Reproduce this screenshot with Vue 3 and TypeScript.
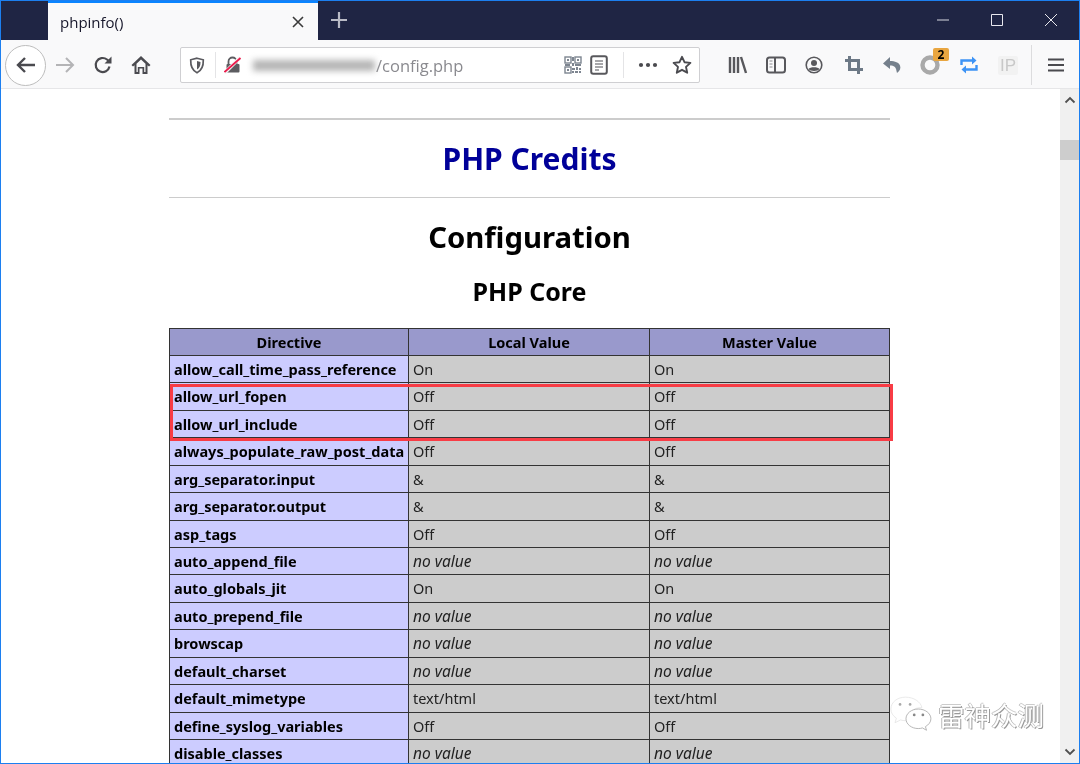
<script setup lang="ts">
interface Row { name: string; local: string; master: string }
const none = 'no value'
const rows: Row[] = [
  { name: 'allow_call_time_pass_reference', local: 'On', master: 'On' },
  { name: 'allow_url_fopen', local: 'Off', master: 'Off' },
  { name: 'allow_url_include', local: 'Off', master: 'Off' },
  { name: 'always_populate_raw_post_data', local: 'Off', master: 'Off' },
  { name: 'arg_separator.input', local: '&', master: '&' },
  { name: 'arg_separator.output', local: '&', master: '&' },
  { name: 'asp_tags', local: 'Off', master: 'Off' },
  { name: 'auto_append_file', local: none, master: none },
  { name: 'auto_globals_jit', local: 'On', master: 'On' },
  { name: 'auto_prepend_file', local: none, master: none },
  { name: 'browscap', local: none, master: none },
  { name: 'default_charset', local: none, master: none },
  { name: 'default_mimetype', local: 'text/html', master: 'text/html' },
  { name: 'define_syslog_variables', local: 'Off', master: 'Off' },
  { name: 'disable_classes', local: none, master: none },
]
</script>

<template>
  <div class="window">
    <header class="tabbar">
      <div class="tab">
        <span class="tab-title">phpinfo()</span>
        <svg class="tab-close" width="14" height="14" viewBox="0 0 14 14"><path d="M2 2l10 10M12 2L2 12" stroke="#3a3a3a" stroke-width="1.6" fill="none" /></svg>
      </div>
      <svg class="newtab" width="18" height="18" viewBox="0 0 18 18"><path d="M9 1v16M1 9h16" stroke="#b9bbc6" stroke-width="2.2" fill="none" /></svg>
      <div class="winctl">
        <svg width="14" height="14" viewBox="0 0 14 14"><path d="M1 7h12" stroke="#d8d9e0" stroke-width="1" /></svg>
        <svg width="14" height="14" viewBox="0 0 14 14"><path d="M1.5 1.5h11v11h-11z" stroke="#e8e8ee" stroke-width="1" fill="none" /></svg>
        <svg width="14" height="14" viewBox="0 0 14 14"><path d="M1 1l12 12M13 1L1 13" stroke="#e8e8ee" stroke-width="1" fill="none" /></svg>
      </div>
    </header>

    <nav class="toolbar">
      <button class="back">
        <svg width="22" height="22" viewBox="0 0 22 22"><path d="M20 11H3M10 4l-7 7 7 7" stroke="#4a4a4f" stroke-width="2.4" fill="none" /></svg>
      </button>
      <svg class="tb fwd" width="22" height="22" viewBox="0 0 22 22"><path d="M2 11h17M12 4l7 7-7 7" stroke="#b4b4b6" stroke-width="2" fill="none" /></svg>
      <svg class="tb reload" width="20" height="20" viewBox="0 0 20 20"><path d="M16.5 11.5A7 7 0 1 1 14 4.5L17 7" stroke="#4a4a4f" stroke-width="2.2" fill="none" /><path d="M18.5 1.5v7h-7z" fill="#4a4a4f" /></svg>
      <svg class="tb home" width="20" height="20" viewBox="0 0 20 20"><path d="M10 1L.5 10l1.500 1.500L3.500 10.200V19h5v-5.500h3V19h5v-8.800l1.500 1.300L19.500 10z" fill="#4a4a4f" /><path d="M10 4.500l4.500 4.200V17h-1.300v-5H6.800v5H5.500V8.700z" fill="#f9f9fa" /></svg>

      <div class="urlbar">
        <svg class="shield" width="16" height="17" viewBox="0 0 16 17"><path d="M8 1.2l6.3 1.6c.2 6-1.2 10.600-6.300 13-5.100-2.400-6.500-7-6.300-13z" stroke="#5a5a5f" stroke-width="1.700" fill="none" /><path d="M8 4l3.500 1c0 3.500-.8 6-3.500 7.500z" fill="#5a5a5f" /></svg>
        <span class="url-sep first"></span>
        <svg class="lock" width="18" height="18" viewBox="0 0 18 18"><path d="M4.500 8V5.500a4 4 0 0 1 8 0V8" stroke="#5c5c60" stroke-width="1.800" fill="none" /><rect x="2.500" y="8" width="13" height="8.500" rx="1" fill="#5c5c60" /><path d="M.5 17L16 1.500" stroke="#f5f5f5" stroke-width="3.500" /><path d="M.5 16L16.500 2" stroke="#ea1a4b" stroke-width="1.800" /></svg>
        <span class="blurred"></span>
        <span class="url-text">/config.php</span>
        <svg class="qr" width="18" height="18" viewBox="0 0 18 18"><g fill="none" stroke="#7d8590" stroke-width="1.400"><rect x="1" y="1" width="6" height="6" /><rect x="11" y="1" width="6" height="6" /><rect x="1" y="11" width="6" height="6" /></g><g fill="#7d8590"><rect x="3" y="3" width="2" height="2" /><rect x="13" y="3" width="2" height="2" /><rect x="3" y="13" width="2" height="2" /><rect x="8" y="1" width="2" height="4" /><rect x="8" y="7" width="2" height="3" /><rect x="1" y="8" width="5" height="2" /><rect x="11" y="8" width="6" height="2" /><rect x="8" y="12" width="3" height="2" /><rect x="12" y="11" width="2" height="3" /><rect x="15" y="12" width="2" height="2" /><rect x="8" y="15" width="2" height="2" /><rect x="11" y="15" width="3" height="2" /><rect x="15" y="15" width="2" height="2" /></g></svg>
        <svg class="reader" width="18" height="20" viewBox="0 0 18 20"><rect x="1.200" y="1.200" width="15.600" height="17.600" rx="2" stroke="#58585c" stroke-width="2" fill="none" /><path d="M5 6h8M5 9h8M5 12h8M5 15h4" stroke="#8b8b8f" stroke-width="1.300" /></svg>
        <span class="url-sep second"></span>
        <svg class="dots" width="20" height="6" viewBox="0 0 20 6"><circle cx="3" cy="3" r="2.100" fill="#4a4a4f" /><circle cx="10" cy="3" r="2.100" fill="#4a4a4f" /><circle cx="17" cy="3" r="2.100" fill="#4a4a4f" /></svg>
        <svg class="star" width="20" height="20" viewBox="0 0 20 20"><path d="M10 1.800l2.500 5.400 5.900.7-4.400 4 1.200 5.800-5.200-2.900-5.200 2.900 1.200-5.800-4.400-4 5.900-.7z" stroke="#4a4a4f" stroke-width="1.900" stroke-linejoin="round" fill="none" /></svg>
      </div>

      <div class="tools">
        <svg class="t-lib" width="20" height="18" viewBox="0 0 20 18"><path d="M2 1v16M6 1v16M10 1v16M13 1l5 16" stroke="#58585c" stroke-width="2.400" fill="none" /></svg>
        <svg class="t-side" width="20" height="18" viewBox="0 0 20 18"><rect x="1" y="1.500" width="18" height="15" rx="2.500" stroke="#58585c" stroke-width="2" fill="none" /><path d="M9 1.500v15" stroke="#58585c" stroke-width="2" /><path d="M3.500 5h3M3.500 8h3M3.500 11h3" stroke="#8b8b8f" stroke-width="1.200" /></svg>
        <svg class="t-acct" width="18" height="18" viewBox="0 0 18 18"><circle cx="9" cy="9" r="7.800" stroke="#58585c" stroke-width="1.600" fill="none" /><circle cx="9" cy="7" r="3" fill="#58585c" /><path d="M3.500 13c1.500-2.500 9.500-2.500 11 0-1.500 2.600-9.500 2.600-11 0z" fill="#58585c" /></svg>
        <svg class="t-crop" width="18" height="18" viewBox="0 0 18 18"><path d="M4.500 0v13.500H18M0 4.500h13.500V18" stroke="#6d7986" stroke-width="3" fill="none" /></svg>
        <svg class="t-undo" width="18" height="18" viewBox="0 0 18 18"><path d="M7 1L0 7.500 7 13V9.500c4 0 6 1.500 6.500 5.500l.5 2c3-2 4-5 3-7.500C16 6.500 12 5 7 5z" fill="#75808c" /></svg>
        <span class="t-ring">
          <svg width="20" height="20" viewBox="0 0 20 20"><circle cx="10" cy="10" r="7.500" stroke="#a9a9a9" stroke-width="4.400" fill="none" /></svg>
          <b class="badge">2</b>
        </span>
        <svg class="t-loop" width="18" height="20" viewBox="0 0 18 20"><path d="M1.500 10V5.500h12M16.500 10v4.500H4.500" stroke="#3d93f5" stroke-width="2.400" fill="none" /><path d="M12 1.500l4.500 4-4.500 4zM6 10.500l-4.500 4 4.500 4z" fill="#3d93f5" /></svg>
        <span class="t-ip">IP</span>
        <span class="t-sep"></span>
        <svg class="t-menu" width="16" height="14" viewBox="0 0 16 14"><path d="M0 1.500h16M0 7h16M0 12.500h16" stroke="#4a4a4f" stroke-width="2.200" /></svg>
      </div>
    </nav>

    <div class="viewport">
      <main class="page">
        <hr class="rule thick" />
        <h1 class="credits">PHP Credits</h1>
        <hr class="rule thin" />
        <h1 class="config">Configuration</h1>
        <h2 class="core">PHP Core</h2>
        <div class="table">
          <div class="cell head">Directive</div>
          <div class="cell head">Local Value</div>
          <div class="cell head">Master Value</div>
          <template v-for="row in rows" :key="row.name">
            <div class="cell name">{{ row.name }}</div>
            <div class="cell val" :class="{ none: row.local === none }">{{ row.local }}</div>
            <div class="cell val" :class="{ none: row.master === none }">{{ row.master }}</div>
          </template>
          <div class="highlight"></div>
        </div>
      </main>
      <aside class="scrollbar">
        <svg width="12" height="8" viewBox="0 0 12 8"><path d="M1.500 6.500L6 2l4.500 4.500" stroke="#505050" stroke-width="1.800" fill="none" /></svg>
        <span class="thumb"></span>
        <svg class="down" width="12" height="8" viewBox="0 0 12 8"><path d="M1.500 1.500L6 6l4.500-4.500" stroke="#505050" stroke-width="1.800" fill="none" /></svg>
      </aside>
      <div class="watermark">
        <svg width="42" height="37" viewBox="0 0 46 40">
          <path d="M17 1C8 1 1 6.500 1 14c0 4 2 7.500 6 10l-1.500 5 6-3c2 .5 3.500.8 5.500.8 1 0 2 0 3-.2C19 18 26 12 35 12.500 33.500 6 26 1 17 1z" fill="#fff" stroke="#e2e2e2" stroke-width=".8" />
          <path d="M31 14c-7.500 0-13.500 4.800-13.500 10.700S23.500 35.400 31 35.400c1.700 0 3-.2 4.500-.7l4.500 2.600-1.200-4c3.700-2.200 6-5 6-8.600C44.800 18.800 38.500 14 31 14z" fill="#fff" stroke="#a8a8a8" stroke-width=".9" />
          <circle cx="11" cy="9" r="1.500" fill="#aaa" /><circle cx="22" cy="9" r="1.500" fill="#aaa" />
          <circle cx="26.500" cy="20.500" r="1.500" fill="#888" /><circle cx="36" cy="20.500" r="1.500" fill="#888" />
        </svg>
        <span class="wm-text">雷神众测</span>
      </div>
    </div>
  </div>
</template>

<style>
html, body { margin: 0; padding: 0; overflow: hidden; }
</style>

<style scoped>
.window {
  width: 1080px;
  height: 764px;
  box-sizing: border-box;
  border: 1px solid #1c7ff0;
  display: flex;
  flex-direction: column;
  overflow: hidden;
  font-family: "Noto Sans", "Open Sans", sans-serif;
  background: #fff;
  position: relative;
  filter: blur(0.3px);
}
.tabbar {
  height: 39px;
  flex: none;
  background: #1f2544;
  display: flex;
  align-items: flex-end;
  padding-left: 47px;
  position: relative;
}
.tab {
  width: 270px;
  height: 39px;
  background: #f9f9fa;
  border-top: 2px solid #0a84ff;
  display: flex;
  align-items: center;
  justify-content: space-between;
  box-sizing: border-box;
  padding: 0 13px 0 12px;
}
.tab-title { font-family: "Open Sans", sans-serif; font-size: 15px; color: #16162a; }
.newtab { margin: 0 0 11px 12px; }
.winctl {
  position: absolute;
  right: 1px;
  top: 12px;
  width: 142px;
  display: flex;
  justify-content: space-between;
  padding-right: 20px;
  box-sizing: border-box;
}
.winctl svg { width: 14px; }
.toolbar {
  height: 49px;
  flex: none;
  background: #f9f9fa;
  border-bottom: 1px solid #e6e6e8;
  padding-top: 2px;
  box-sizing: border-box;
  display: flex;
  align-items: center;
  position: relative;
}
.back {
  width: 41px;
  height: 41px;
  border-radius: 50%;
  border: 1px solid #bdbdbd;
  background: #fff;
  padding: 0;
  margin-left: 4px;
  display: flex;
  align-items: center;
  justify-content: center;
}
.tb { flex: none; }
.fwd { margin-left: 8px; }
.reload { margin-left: 17px; }
.home { margin-left: 18px; }
.urlbar {
  margin-left: 29px;
  width: 520px;
  height: 36px;
  box-sizing: border-box;
  background: #fff;
  border: 1px solid #cfcfd2;
  border-radius: 2px;
  display: flex;
  align-items: center;
  flex: none;
}
.shield { margin-left: 8px; }
.url-sep { width: 1px; height: 26px; background: #e4e4e6; }
.url-sep.first { margin-left: 10px; }
.url-sep.second { margin-left: 15px; }
.lock { margin-left: 8px; }
.blurred {
  width: 122px;
  height: 11px;
  margin-left: 11px;
  background: #b5b5b5;
  filter: blur(3px);
}
.url-text {
  font-family: "Open Sans", sans-serif;
  font-size: 16.5px;
  color: #8a8a8f;
  margin-left: 1px;
  width: 188px;
}
.reader { margin-left: 8px; }
.dots { margin-left: 14px; }
.star { margin-left: 14px; }
.tools {
  flex: 1;
  display: flex;
  align-items: center;
  position: relative;
  height: 100%;
}
.t-lib { margin-left: 28px; }
.t-side { margin-left: 18px; }
.t-acct { margin-left: 19px; }
.t-crop { margin-left: 22px; }
.t-undo { margin-left: 20px; }
.t-ring { margin-left: 19px; position: relative; display: flex; }
.badge {
  position: absolute;
  left: 13px;
  top: -7px;
  width: 16px;
  height: 13px;
  line-height: 13px;
  background: #e9a640;
  border-radius: 2px;
  font-size: 12px;
  font-weight: 700;
  color: #000;
  text-align: center;
}
.t-loop { margin-left: 20px; }
.t-ip {
  margin-left: 20px;
  width: 20px;
  height: 19px;
  line-height: 19px;
  text-align: center;
  font-family: "Liberation Sans", sans-serif;
  font-size: 17px;
  color: #c8c8c8;
  background: #f2f2f2;
  border-radius: 2px;
}
.t-sep { width: 1px; height: 40px; background: #dcdcde; margin-left: 13px; }
.t-menu { margin-left: 16px; }
.viewport {
  flex: 1;
  min-height: 0;
  display: flex;
  position: relative;
  overflow: hidden;
}
.page {
  flex: 1;
  min-width: 0;
  padding: 29px 170px 0 168px;
  box-sizing: border-box;
  color: #000;
  font-family: "Noto Sans", sans-serif;
}
.rule { border: 0; margin: 0; background: #ccc; }
.rule.thick { height: 2px; }
.rule.thin { height: 1px; }
.credits {
  margin: 0;
  height: 77px;
  line-height: 78px;
  text-align: center;
  font-size: 30px;
  font-weight: 700;
  color: #000099;
}
.config {
  margin: 0;
  padding-top: 16px;
  height: 46px;
  line-height: 46px;
  text-align: center;
  font-size: 29.3px;
  font-weight: 700;
}
.core {
  margin: 0;
  padding-top: 12px;
  height: 55.5px;
  line-height: 38px;
  text-align: center;
  font-size: 25px;
  font-weight: 700;
}
.table {
  width: 721px;
  display: grid;
  grid-template-columns: 239px 241px 240px;
  grid-auto-rows: 27.45px;
  position: relative;
  border-top: 1px solid #333;
  border-left: 1px solid #333;
  box-sizing: border-box;
}
.cell {
  border-right: 1px solid #333;
  border-bottom: 1px solid #333;
  box-sizing: border-box;
  font-size: 14.5px;
  line-height: 26.5px;
  padding: 0 4px;
  white-space: nowrap;
  overflow: hidden;
}
.head { background: #9999cc; font-weight: 700; text-align: center; }
.name { background: #ccccff; font-weight: 700; }
.val { background: #cccccc; color: #222; }
.none { font-style: italic; font-size: 15.5px; }
.highlight {
  position: absolute;
  left: 0;
  top: 55.5px;
  width: 723px;
  height: 57px;
  box-sizing: border-box;
  border: 3px solid #f83c45;
  pointer-events: none;
}
.scrollbar {
  width: 19px;
  flex: none;
  background: #f0f0f0;
  display: flex;
  flex-direction: column;
  align-items: center;
  padding-top: 7px;
  padding-bottom: 7px;
  box-sizing: border-box;
}
.thumb {
  width: 19px;
  height: 20px;
  background: #cdcdcd;
  margin-top: 36px;
}
.down { margin-top: auto; }
.watermark {
  position: absolute;
  left: 889px;
  top: 607px;
  display: flex;
  align-items: center;
  gap: 6px;
}
.wm-text {
  font-family: "Noto Sans CJK SC", sans-serif;
  font-size: 26.5px;
  color: #fff;
  text-shadow: 1px 1px 0 #999, -1px 0 0 #bbb, 0 -1px 0 #ccc;
  line-height: 34px;
}
</style>
